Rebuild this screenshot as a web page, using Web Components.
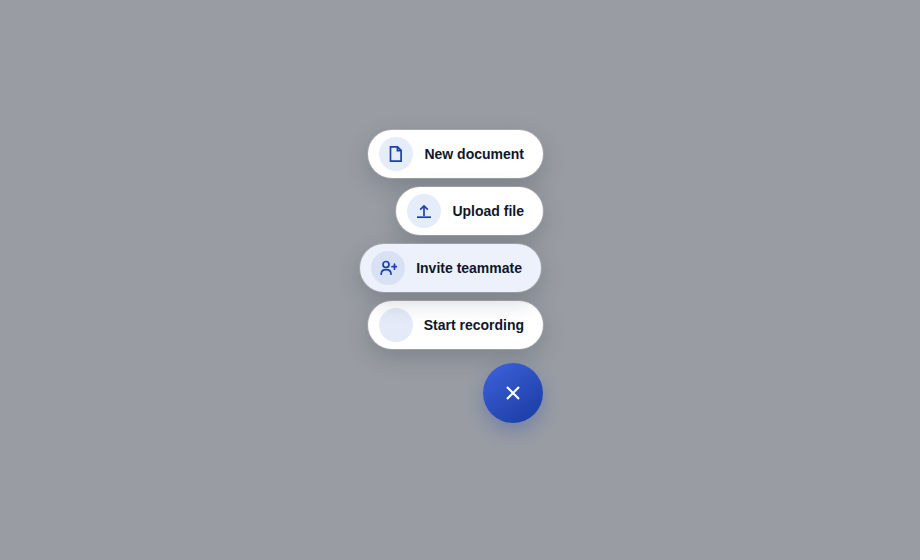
<!DOCTYPE html>
<html>
<head>
<meta charset="utf-8">
<title>Quick actions</title>
<style>
  html, body { margin: 0; height: 100%; }
  body { background: #999da3; font-family: "Liberation Sans", sans-serif; }
</style>
</head>
<body>
<fab-menu>
  <fab-item label="New document">
    <svg viewBox="0 0 18 18" width="18" height="18" fill="none" stroke="#1e40af" stroke-width="1.7"><path d="M3.5 1.85h7l3.6 3.6v10.7H3.5z"/><path d="M10.4 1.85v3.7h3.7"/></svg>
  </fab-item>
  <fab-item label="Upload file">
    <svg viewBox="0 0 18 18" width="18" height="18" fill="none" stroke="#1e40af" stroke-width="1.7"><path d="M9 14V4"/><path d="M5.2 7.6 9 3.9l3.8 3.7"/><path d="M2 15.2h14"/></svg>
  </fab-item>
  <fab-item label="Invite teammate" active>
    <svg viewBox="0 0 18 18" width="18" height="18" fill="none" stroke="#1e40af" stroke-width="1.7" stroke-linecap="round"><circle cx="7" cy="5.5" r="3"/><path d="M2.2 15.2c0-3 2.2-4.6 4.9-4.6s4.9 1.6 4.9 4.6"/><path d="M15.5 5.2v5M13 7.7h5"/></svg>
  </fab-item>
  <fab-item label="Start recording" blank></fab-item>
  <fab-button></fab-button>
</fab-menu>
<script>
class FabMenu extends HTMLElement {
  constructor() {
    super();
    this.attachShadow({ mode: 'open' }).innerHTML = `
      <style>
        :host {
          display: flex;
          flex-direction: column;
          align-items: flex-end;
          box-sizing: border-box;
          padding: 130px 377px 0 0;
        }
        ::slotted(fab-button) { margin-top: 5px; }
      </style>
      <slot></slot>
    `;
  }
}

class FabItem extends HTMLElement {
  constructor() {
    super();
    this.attachShadow({ mode: 'open' }).innerHTML = `
      <style>
        :host {
          display: flex;
          align-items: center;
          box-sizing: border-box;
          height: 48px;
          margin-bottom: 9px;
          padding: 0 19px 0 11px;
          gap: 11px;
          background: #fff;
          border-radius: 24px;
          box-shadow: 0 0 0 1px rgba(255,255,255,.18), 0 8px 24px rgba(15,23,42,.2);
          color: #0f172a;
          font: 700 14px/20px "Liberation Sans", sans-serif;
          white-space: nowrap;
        }
        :host([active]) {
          background: #ecf1fb;
          transform: translateX(-2px);
        }
        :host([blank]) { gap: 10.6px; }
        .icon {
          display: flex;
          align-items: center;
          justify-content: center;
          width: 34px;
          height: 34px;
          border-radius: 50%;
          background: #e6edfa;
        }
        :host([active]) .icon { background: #d9e2f5; }
        :host([blank]) .icon { background: #e4eaf7; }
      </style>
      <span class="icon"><slot></slot></span>
      <span class="label"></span>
    `;
    this.shadowRoot.querySelector('.label').textContent = this.getAttribute('label');
  }
}

class FabButton extends HTMLElement {
  constructor() {
    super();
    this.attachShadow({ mode: 'open' }).innerHTML = `
      <style>
        :host {
          display: flex;
          align-items: center;
          justify-content: center;
          width: 60px;
          height: 60px;
          border-radius: 50%;
          background: linear-gradient(145deg, #3f63dc, #173a9f);
          box-shadow: 0 8px 20px rgba(30,64,175,.3);
        }
      </style>
      <svg viewBox="0 0 20 20" width="20" height="20" fill="none" stroke="#fff" stroke-width="2.2"><path d="M4 4l12 12M16 4 4 16"/></svg>
    `;
  }
}

customElements.define('fab-menu', FabMenu);
customElements.define('fab-item', FabItem);
customElements.define('fab-button', FabButton);
</script>
</body>
</html>
